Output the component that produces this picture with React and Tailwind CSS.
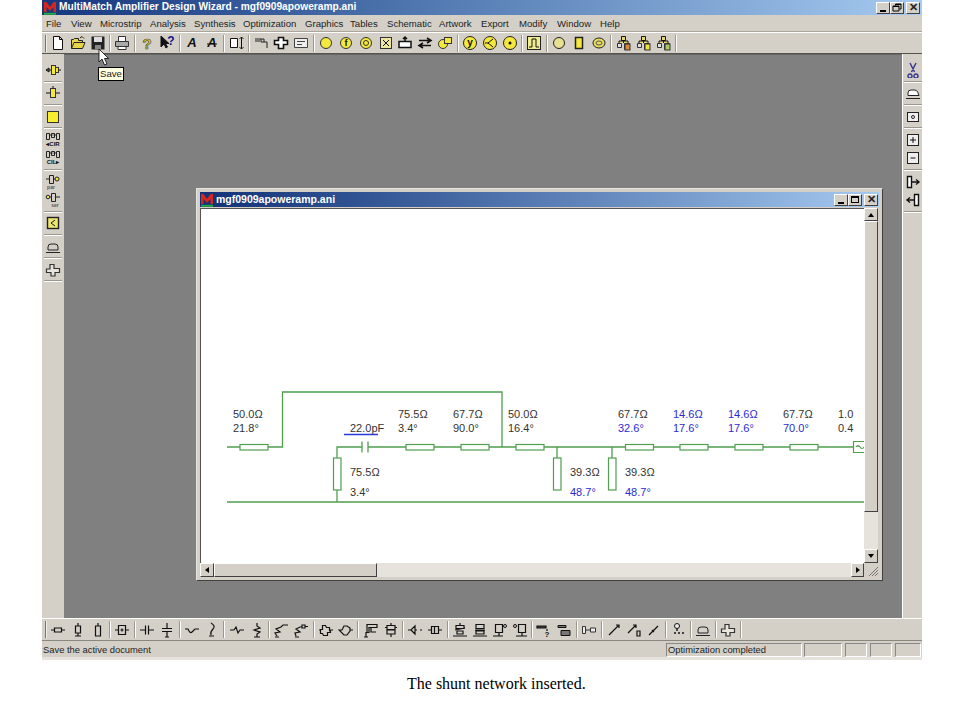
import React from 'react';

const P = ({ d, f = 'none', s = '#111', w = 1 }) => <path d={d} fill={f} stroke={s} strokeWidth={w} />;
const Y = '#f5e83c';

const Letter = ({ t, x = 8, y = 12, size = 12, fill = '#111', italic, outline }) => (
  <text x={x} y={y} fontSize={size} fontWeight="700" fontStyle={italic ? 'italic' : 'normal'} fill={fill} stroke={outline} strokeWidth={outline ? 0.6 : 0} textAnchor="middle" fontFamily="Liberation Sans">{t}</text>
);

const Node = ({ c }) => (
  <>
    <P d="M5.5 1.5h4v4h-4zM3 8V6h9v2M7.5 5.5V8" f="#e8d870" />
    <P d="M1.5 8.5h4v4h-4zM8.5 8.5h5v6h-5z" f="#ddd" s="#333" />
    <rect x="9" y="9" width="5" height="6" fill={c} stroke="#333" />
  </>
);

const icons = {
  new: <P d="M3.5 1.5h6l3 3v10h-9zM9.5 1.5v3h3" f="#fff" />,
  open: <P d="M1.5 13.5v-9h2l1-1h4v2h4v2M1.5 13.5l2.5-6h11l-2.5 6zM10 3l2-1.5 2 2" f="#e8d44a" s="#222" />,
  save: <><rect x="1.5" y="1.5" width="13" height="13" fill="#222" /><rect x="4" y="2" width="8" height="5" fill="#ddd" /><rect x="5" y="10" width="6" height="4" fill="#888" /></>,
  print: <><P d="M4.5 6V1.5h7V6" f="#fff" s="#333" /><P d="M1.5 6.5h13v5h-13z" f="#aaa" s="#333" /><P d="M4 11.5h8v3H4z" f="#fff" s="#333" /></>,
  help: <Letter t="?" size={15} y={13.5} fill="#e0d020" outline="#444" />,
  whats: <><P d="M2 1v11l3-3 2 4 1.5-1-2-3.5H10z" f="#111" /><Letter t="?" x={12} y={10} size={12} fill="#12128c" /></>,
  a1: <Letter t="A" size={13} italic />,
  a2: <><Letter t="A" size={13} italic /><P d="M3 9h10" /></>,
  boxArrow: <P d="M1.5 3.5h7v9h-7zM12.5 2v12M10.5 4l2-2 2 2M10.5 12l2 2 2-2" f="#fff" />,
  tee: <P d="M1 4h9v3h3v6M10 7H7V4M1 6h5" s="#222" />,
  plus: <P d="M5.5 2.5h5v3h4v4h-4v4h-5v-4h-4v-4h4z" f="#fff" w={1.6} />,
  text: <P d="M1.5 3.5h13v9h-13zM4 6.5h8M4 9.5h5" f="#eee" s="#444" />,
  circle: <circle cx="8" cy="8" r="5.5" fill={Y} stroke="#333" />,
  circleF: <><circle cx="8" cy="8" r="5.5" fill={Y} stroke="#333" /><Letter t="f" y={11} size={9} /></>,
  ring: <><circle cx="8" cy="8" r="5.5" fill={Y} stroke="#333" /><circle cx="8" cy="8" r="2.5" fill="none" stroke="#333" /></>,
  xbox: <><rect x="2.5" y="2.5" width="11" height="11" fill="#ece6a0" stroke="#333" /><P d="M5 5l6 6M11 5l-6 6" /></>,
  tick: <P d="M2 6.5h12v6H2zM8 6.5V2M6 4l2-2 2 2" f="#fff" w={1.5} />,
  swap: <P d="M2 5.5h12M10 3l4 2.5-4 2.5M14 10.5H2M6 8l-4 2.5L6 13" w={1.6} />,
  blob: <><circle cx="6" cy="9" r="4.5" fill={Y} stroke="#333" /><rect x="7.5" y="2.5" width="7" height="6" fill={Y} stroke="#333" /></>,
  cy: <><circle cx="8" cy="8" r="6.5" fill={Y} stroke="#222" /><Letter t="y" y={11} size={10} /></>,
  cless: <><circle cx="8" cy="8" r="6.5" fill={Y} stroke="#222" /><P d="M11 4L6 8l5 4M3 8h3" /></>,
  cdot: <><circle cx="8" cy="8" r="6.5" fill={Y} stroke="#222" /><circle cx="8" cy="8" r="1.5" fill="#111" /></>,
  pulse: <><rect x="1.5" y="1.5" width="13" height="13" fill="#f2ec90" stroke="#222" /><P d="M3 12h3V4h4v8h3" /></>,
  cpale: <><circle cx="8" cy="8" r="5.5" fill="#e6e090" stroke="#222" w={1.5} /></>,
  rectY: <rect x="4.5" y="2.5" width="7" height="11" fill={Y} stroke="#222" strokeWidth="1.5" />,
  oval: <><ellipse cx="8" cy="8" rx="6" ry="5" fill="#e6dc60" stroke="#222" /><ellipse cx="8" cy="8" rx="3" ry="2" fill="none" stroke="#555" /></>,
  net1: <Node c="#d9853a" />,
  net2: <Node c="#f0e040" />,
  net3: <Node c="#a8c860" />,

  // left and right bars
  tap: <><rect x="6.5" y="3.5" width="4" height="9" fill={Y} stroke="#333" /><rect x="10.5" y="5.5" width="3" height="5" fill={Y} stroke="#333" /><P d="M1 8h5M13.5 8H16M1 8l3-2v4z" /></>,
  tap2: <><rect x="5.5" y="3.5" width="5" height="9" fill={Y} stroke="#333" /><P d="M1 8h4.5M10.5 8H15M8 1v2.5" /></>,
  sq: <rect x="2.5" y="2.5" width="11" height="11" fill="#f7ee30" stroke="#333" />,
  cir1: <><P d="M1.5 1.5h3v6h-3zM11.5 1.5h3v6h-3zM4.5 3h3M8.5 3h3M6.5 1.5h3v4h-3z" s="#222" /><Letter t="◂CIR" y={14} size={6} /></>,
  cir2: <><P d="M1.5 1.5h3v6h-3zM11.5 1.5h3v6h-3zM4.5 3h3M8.5 3h3M6.5 1.5h3v4h-3z" s="#222" /><Letter t="CIL▸" y={14} size={6} /></>,
  par1: <><P d="M4.5 1.5h4v8h-4zM1 5h3.5" s="#222" /><circle cx="12" cy="5" r="2" fill={Y} stroke="#222" /><P d="M8.5 5H10" s="#222" /><Letter t="par" x={6} y={15} size={5} fill="#555" /></>,
  par2: <><P d="M6.5 1.5h4v8h-4zM1 5h5.5M10.5 5H15" s="#222" /><circle cx="3" cy="5" r="1.8" fill={Y} stroke="#222" /><Letter t="ser" x={10} y={15} size={5} fill="#555" /></>,
  ybox: <><rect x="2.5" y="2.5" width="11" height="11" fill="#ece670" stroke="#222" strokeWidth="1.4" /><P d="M10 5L6 8l4 3" /></>,
  flat: <P d="M1 13.5h14M3 11V8q0-3 3-3h4q3 0 3 3v3H3" s="#222" />,
  cross: <P d="M5 2.5h4v4h5.5v4H10V14H6v-3.5H1.5V7H5z" f="#e8e5de" s="#333" w={1.2} />,
  scissors: <P d="M5 1l4.5 9M11 1L6.5 10M5 12a2 2 0 1 0 .01 0M11 12a2 2 0 1 0 .01 0" s="#3b3b90" w={1.5} />,
  shape: <P d="M1 13.5h14M3 10.5V8q0-3 3-3h4q3 0 4 5.5z" f="#fff" s="#222" />,
  dot: <><rect x="2.5" y="3.5" width="11" height="9" fill="#eee" stroke="#222" /><circle cx="8" cy="8" r="1.5" fill="none" stroke="#222" /></>,
  zoomIn: <><rect x="2.5" y="2.5" width="11" height="11" fill="#eee" stroke="#222" /><P d="M5 8h6M8 5v6" /></>,
  zoomOut: <><rect x="2.5" y="2.5" width="11" height="11" fill="#eee" stroke="#222" /><P d="M5.5 8h5" /></>,
  portR: <P d="M2.5 2.5h4v11h-4zM6.5 8H14M11 5.5L14 8l-3 2.5" f="#fff" w={1.4} />,
  portL: <P d="M9.5 2.5h4v11h-4zM9.5 8H2M5 5.5L2 8l3 2.5" f="#fff" w={1.4} />,

  // bottom bar
  b1: <P d="M1 8h3.5M4.5 6h7v4h-7zM11.5 8H15" w={1.2} />,
  b2: <P d="M8 1v3M5.5 4h5v7h-5zM8 11v3M5 14h6" w={1.2} />,
  b3: <P d="M8 1v3M5.5 4h5v10h-5z" w={1.2} />,
  b4: <P d="M1 8h3M4.5 3.5h7v9h-7zM11.5 8H15M6.5 8h3M8 6.5v3" w={1.2} />,
  b5: <P d="M1 8h5.5M6.5 3.5v9M9.5 3.5v9M9.5 8H15" w={1.2} />,
  b6: <P d="M8 1v5.5M3 6.5h10M3 9.5h10M8 9.5V15M6 15h4" w={1.2} />,
  b7: <P d="M1 7h3q2 5 4 3t3-3h4" w={1.2} />,
  b8: <P d="M7 1q5 3 2 6t-2 6M5 14h5" w={1.2} />,
  b9: <P d="M1 8h4l2-3 2 6 2-3h4" w={1.2} />,
  b10: <P d="M8 1v3l3 2-6 2 6 2-3 2v3M5 15h6" w={1.2} />,
  b11: <P d="M4 14l-2-3 5-1-4-3 5-2 2-2h5M2 15h4" w={1.2} />,
  b12: <P d="M3 14l-1-3 5-1-4-3 4-2h2M9 3h3v3H9zM12 4.5h3M2 15h4" w={1.2} />,
  b13: <P d="M4.5 3.5h3l1 2h3v3l1 1v1h-3v3h-4l-1-2h-2v-4h2zM1 8h2M12 8h3" w={1.2} />,
  b14: <P d="M1 8h3l2-4h3l3 2v3l-3 4H6zM12 8h3" w={1.2} />,
  b15: <P d="M4 2.5h10v3H6v5H4zM8 6v4h5M3 10v5M1 15h4" w={1.2} />,
  b16: <P d="M8 1v2M4 3.5h8v4H4zM4 8h8v4H4zM8 12v3M2 5.5h2M12 5.5h2" w={1.2} />,
  b17: <P d="M1 8h3l4-4v8l-4-4M8 8h2M13 8h2" w={1.2} />,
  b18: <P d="M1 8h3M4.5 4.5h7v7h-7zM7.5 4.5v7M11.5 8H15" w={1.2} />,
  b19: <P d="M8 1v2M4 3.5h8v3H4zM3 8l10-2M5 9h6v3H5zM1 14h14" w={1.2} />,
  b20: <P d="M4 2.5h8v4H4zM3 8h10M4 9h8v3H4zM1 14h14" w={1.2} />,
  b21: <><P d="M3.5 2.5h7v8h-7zM1 14h10M7 10.5V14" w={1.2} /><circle cx="13" cy="4" r="1.5" fill="none" stroke="#111" /></>,
  b22: <><P d="M6.5 2.5h7v8h-7zM4 14h11M10 10.5V14" w={1.2} /><circle cx="3" cy="4" r="1.5" fill="none" stroke="#111" /></>,
  b23: <><P d="M1 4h9v2H1zM11 7v2" w={1.2} f="#444" /><Letter t="?" x={11} y={15} size={8} /></>,
  b24: <P d="M2 3.5h8v2H2zM5 8.5h9v5H5z" f="#777" w={1} />,
  b25: <P d="M1.5 4.5h3v7h-3zM4.5 8h5M9.5 6h5v4h-5z" s="#333" f="#eee" />,
  b26: <P d="M3 13L13 3M10 3h3v3M5 11l-2 2" w={1.2} />,
  b27: <P d="M2 11L10 3M7 3h3v3M11 9h3v5h-3z" w={1.2} />,
  b28: <P d="M3 13L12 4M6 8l2 2" w={1.3} />,
  b29: <><circle cx="6" cy="4" r="2.5" fill="#eee" stroke="#111" /><P d="M6 6.5V9M3 11h2M7 11h2M11 11h2" w={1.4} /></>,
};

const topBar = [
  ['new', 'open', 'save'], ['print'], ['help', 'whats'], ['a1', 'a2'], ['boxArrow'], ['tee', 'plus', 'text'],
  ['circle', 'circleF', 'ring', 'xbox', 'tick', 'swap', 'blob'], ['cy', 'cless', 'cdot'], ['pulse'],
  ['cpale', 'rectY', 'oval'], ['net1', 'net2', 'net3'],
];
const bottomBar = [
  ['b1', 'b2', 'b3'], ['b4'], ['b5', 'b6'], ['b7', 'b8'], ['b9', 'b10'], ['b11', 'b12'], ['b13', 'b14'],
  ['b15', 'b16'], ['b17', 'b18'], ['b19', 'b20', 'b21', 'b22'], ['b23', 'b24'], ['b25'], ['b26', 'b27', 'b28'],
  ['b29'], ['flat'], ['cross'],
];
const leftBar = [['tap'], ['tap2'], ['sq'], ['cir1', 'cir2'], ['par1', 'par2'], ['ybox'], ['flat'], ['cross']];
const rightBar = [['scissors'], ['shape'], ['dot'], ['zoomIn', 'zoomOut'], ['portR', 'portL']];

const menus = [
  ['File', 'w-[25px]'], ['View', 'w-[29px]'], ['Microstrip', 'w-[50px]'], ['Analysis', 'w-[44px]'],
  ['Synthesis', 'w-[49px]'], ['Optimization', 'w-[62px]'], ['Graphics', 'w-[45px]'], ['Tables', 'w-[37px]'],
  ['Schematic', 'w-[52px]'], ['Artwork', 'w-[42px]'], ['Export', 'w-[38px]'], ['Modify', 'w-[38px]'],
  ['Window', 'w-[43px]'], ['Help', 'w-[30px]'],
];

const Icon = ({ name }) => (
  <svg viewBox="0 0 16 16" className="w-[16px] h-[16px]">{icons[name]}</svg>
);

function HBar({ groups }) {
  return (
    <div className="flex items-center h-full">
      {groups.map((group, i) => (
        <React.Fragment key={i}>
          {i > 0 && <div className="w-[5px] h-[17px] flex justify-center"><div className="w-[2px] border-l border-[#9a978f] bg-white" /></div>}
          {group.map((name) => (
            <div key={name} className="w-[19.85px] flex justify-center"><Icon name={name} /></div>
          ))}
        </React.Fragment>
      ))}
      <div className="w-[5px] h-[17px] flex justify-center"><div className="w-[2px] border-l border-[#9a978f] bg-white" /></div>
    </div>
  );
}

function VBar({ groups }) {
  return (
    <div className="flex flex-col items-center pt-[7px]">
      {groups.map((group, i) => (
        <React.Fragment key={i}>
          {group.map((name) => (
            <div key={name} className="h-[18.3px] flex items-center"><Icon name={name} /></div>
          ))}
          <div className="w-[18px] h-[5px] flex items-center"><div className="w-full h-[2px] border-t border-[#9a978f] bg-white" /></div>
        </React.Fragment>
      ))}
    </div>
  );
}

const Logo = () => (
  <svg viewBox="0 0 14 14" className="w-[14px] h-[14px] shrink-0">
    <path d="M1 11V1h2.5L7 6l3.5-5H13v10h-2.5V6L7 10 3.5 6v5z" fill="#d8261c" />
    <path d="M1 12.8h12" stroke="#22aa44" strokeWidth="2" />
  </svg>
);

const Btn = ({ className = '', children }) => (
  <div className={`flex items-center justify-center bg-[#d4d0c8] border border-t-white border-l-white border-r-[#404040] border-b-[#404040] ${className}`}>{children}</div>
);

const Restore = () => (
  <svg viewBox="0 0 10 9" className="w-[10px] h-[9px]"><path d="M3.5 2.5V1h5.5v5H7.5M1 3h6v5H1zM1 3.5h6M3.5 1.5h5.5" fill="none" stroke="#000" /></svg>
);

const Wire = ({ d }) => <path d={d} fill="none" stroke="#4f9f4f" strokeWidth="1.3" />;
const Res = ({ x }) => <rect x={x} y="236.5" width="28" height="5.5" fill="#fff" stroke="#4f9f4f" strokeWidth="1.2" />;
const Shunt = ({ x }) => <rect x={x} y="250" width="7.5" height="32" fill="#fff" stroke="#4f9f4f" strokeWidth="1.2" />;
const Lbl = ({ x, y, blue, children }) => <text x={x} y={y} fontSize="11" fill={blue ? '#2b2bd6' : '#333'} fontFamily="Liberation Sans">{children}</text>;

function Schematic() {
  return (
    <svg viewBox="0 0 664 355" className="w-[664px] h-[355px] bg-white shadow-[inset_1px_1px_0_#555]">
      <Wire d="M27 239H82.5V184H302V239M137 294V239H162M168 239H664M27 294H664M357 239V250M412 239V250" />
      <Wire d="M162 233.5V244.5M168 233.5V244.5" />
      {[40, 206, 261, 316, 425.5, 480, 535, 590].map((x) => <Res key={x} x={x} />)}
      <Shunt x={133.5} /><Shunt x={353.5} /><Shunt x={408.5} />
      <path d="M664 233.5H653.5V244.5H664M656 239q2-3 4 0t4 0" fill="#fff" stroke="#4f9f4f" strokeWidth="1.2" />
      <path d="M144 226.5H178" stroke="#2a3ad8" strokeWidth="1.5" />

      <Lbl x={33} y={210}>50.0Ω</Lbl><Lbl x={33} y={224}>21.8°</Lbl>
      <Lbl x={150} y={224}>22.0pF</Lbl>
      <Lbl x={198} y={210}>75.5Ω</Lbl><Lbl x={198} y={224}>3.4°</Lbl>
      <Lbl x={253} y={210}>67.7Ω</Lbl><Lbl x={253} y={224}>90.0°</Lbl>
      <Lbl x={308} y={210}>50.0Ω</Lbl><Lbl x={308} y={224}>16.4°</Lbl>
      <Lbl x={150} y={268}>75.5Ω</Lbl><Lbl x={150} y={288}>3.4°</Lbl>
      <Lbl x={370} y={268}>39.3Ω</Lbl><Lbl x={370} y={288} blue>48.7°</Lbl>
      <Lbl x={425} y={268}>39.3Ω</Lbl><Lbl x={425} y={288} blue>48.7°</Lbl>
      <Lbl x={418} y={210}>67.7Ω</Lbl><Lbl x={418} y={224} blue>32.6°</Lbl>
      <Lbl x={473} y={210} blue>14.6Ω</Lbl><Lbl x={473} y={224} blue>17.6°</Lbl>
      <Lbl x={528} y={210} blue>14.6Ω</Lbl><Lbl x={528} y={224} blue>17.6°</Lbl>
      <Lbl x={583} y={210}>67.7Ω</Lbl><Lbl x={583} y={224} blue>70.0°</Lbl>
      <Lbl x={638} y={210}>1.0</Lbl><Lbl x={638} y={224}>0.4</Lbl>
    </svg>
  );
}

function ChildWindow() {
  return (
    <div className="absolute left-[154px] top-[134px] w-[687px] h-[393px] bg-[#d4d0c8] border border-t-[#e8e6e0] border-l-[#e8e6e0] border-r-[#404040] border-b-[#404040] p-[3px] flex flex-col">
      <div className="h-[15px] flex items-center justify-between bg-gradient-to-r from-[#123076] to-[#a6caf0] pr-[1px] shrink-0">
        <div className="flex items-center gap-[2px] text-white text-[10.5px] font-bold leading-none">
          <Logo />
          <span>mgf0909apoweramp.ani</span>
        </div>
        <div className="flex">
          <Btn className="w-[14px] h-[12px]"><div className="w-[6px] h-[2px] bg-black mt-[6px]" /></Btn>
          <Btn className="w-[14px] h-[12px]"><div className="w-[8px] h-[7px] border border-t-2 border-black" /></Btn>
          <Btn className="w-[14px] h-[12px] ml-[2px] text-[11px] font-bold leading-none">✕</Btn>
        </div>
      </div>
      <div className="flex mt-[1px]">
        <Schematic />
        <div className="w-[14px] h-[355px] flex flex-col bg-[#e6e3dc]">
          <Btn className="h-[13px] shrink-0"><div className="border-x-[3px] border-x-transparent border-b-[4px] border-b-black" /></Btn>
          <Btn className="h-[291px] shrink-0" />
          <div className="flex-1" />
          <Btn className="h-[14px] shrink-0"><div className="border-x-[3px] border-x-transparent border-t-[4px] border-t-black" /></Btn>
        </div>
      </div>
      <div className="flex h-[14px]">
        <div className="w-[664px] flex bg-[#e6e3dc]">
          <Btn className="w-[14px] shrink-0"><div className="border-y-[3px] border-y-transparent border-r-[4px] border-r-black" /></Btn>
          <Btn className="w-[163px] shrink-0" />
          <div className="flex-1" />
          <Btn className="w-[13px] shrink-0"><div className="border-y-[3px] border-y-transparent border-l-[4px] border-l-black" /></Btn>
        </div>
        <div className="flex-1 flex items-end justify-end">
          <svg viewBox="0 0 12 12" className="w-[12px] h-[12px]"><path d="M11 2L2 11M11 5L5 11M11 8L8 11" stroke="#777" fill="none" /></svg>
        </div>
      </div>
    </div>
  );
}

export default function App() {
  return (
    <div className="h-[720px] bg-white font-['Liberation_Sans',sans-serif]">
      <div className="relative ml-[42px] w-[880px] h-[660px] flex flex-col bg-[#d4d0c8] text-[#222]">
        <div className="h-[15px] shrink-0 flex items-center justify-between bg-gradient-to-r from-[#17367e] via-[#5b82b8] to-[#a6caf0] pr-[2px]">
          <div className="flex items-center gap-[2px] pl-[1px] text-white text-[10.2px] font-bold leading-none">
            <Logo />
            <span>MultiMatch Amplifier Design Wizard - mgf0909apoweramp.ani</span>
          </div>
          <div className="flex">
            <Btn className="w-[14px] h-[12px]"><div className="w-[6px] h-[2px] bg-black mt-[6px]" /></Btn>
            <Btn className="w-[14px] h-[12px]"><Restore /></Btn>
            <Btn className="w-[14px] h-[12px] ml-[2px] text-[11px] font-bold leading-none">✕</Btn>
          </div>
        </div>

        <div className="h-[17px] shrink-0 flex items-center pl-[4px] pt-[2px] text-[9.6px] border-b border-[#aaa69c]">
          {menus.map(([label, width]) => <span key={label} className={`${width} shrink-0`}>{label}</span>)}
        </div>

        <div className="h-[22px] shrink-0 flex items-center border-t border-white border-b border-b-[#55534e]">
          <div className="w-[2px] h-[17px] ml-[3px] mr-[1px] bg-[#f2f0ea] border-l border-[#77746c]" />
          <HBar groups={topBar} />
        </div>

        <div className="h-[564px] shrink-0 flex">
          <div className="w-[22px] shrink-0"><VBar groups={leftBar} /></div>
          <div className="relative flex-1 bg-[#808080] border-t border-[#666]" />
          <div className="w-[20px] shrink-0 border-l border-white"><VBar groups={rightBar} /></div>
        </div>

        <div className="h-[23px] shrink-0 flex items-center border-t border-white border-b border-b-[#8a877f]">
          <div className="w-[2px] h-[17px] ml-[3px] mr-[1px] bg-[#f2f0ea] border-l border-[#77746c]" />
          <HBar groups={bottomBar} />
        </div>

        <div className="h-[16px] shrink-0 flex items-center text-[9.4px] leading-none pl-[1px] pt-[1px]">
          <span className="w-[623px] shrink-0">Save the active document</span>
          <div className="w-[136px] h-[14px] flex items-center pl-[1px] border border-t-[#888] border-l-[#888] border-r-white border-b-white">Optimization completed</div>
          <div className="w-[38px] h-[14px] ml-[2px] border border-t-[#888] border-l-[#888] border-r-white border-b-white" />
          <div className="w-[22px] h-[14px] ml-[3px] border border-t-[#888] border-l-[#888] border-r-white border-b-white" />
          <div className="w-[22px] h-[14px] ml-[3px] border border-t-[#888] border-l-[#888] border-r-white border-b-white" />
          <div className="w-[26px] h-[14px] ml-[3px] border border-t-[#888] border-l-[#888] border-r-white border-b-white" />
        </div>
        <div className="flex-1 bg-[#e6e3dc]" />

        <div className="absolute left-0 top-[54px] w-full">
          <ChildWindow />
        </div>

        <svg viewBox="0 0 12 18" className="absolute left-[56px] top-[48px] w-[12px] h-[18px]">
          <path d="M1 1v13l3-3 2.5 6 2.5-1-2.5-5.5H10.5z" fill="#fff" stroke="#000" strokeWidth="0.8" />
        </svg>
        <div className="absolute left-[56px] top-[67px] w-[26px] h-[14px] bg-[#ffffe1] border border-black text-[9.6px] leading-[12px] text-center">Save</div>
      </div>

      <p className="mt-[15px] ml-[407px] text-[16px] leading-[18px] text-black font-['Liberation_Serif',serif]">The shunt network inserted.</p>
    </div>
  );
}
